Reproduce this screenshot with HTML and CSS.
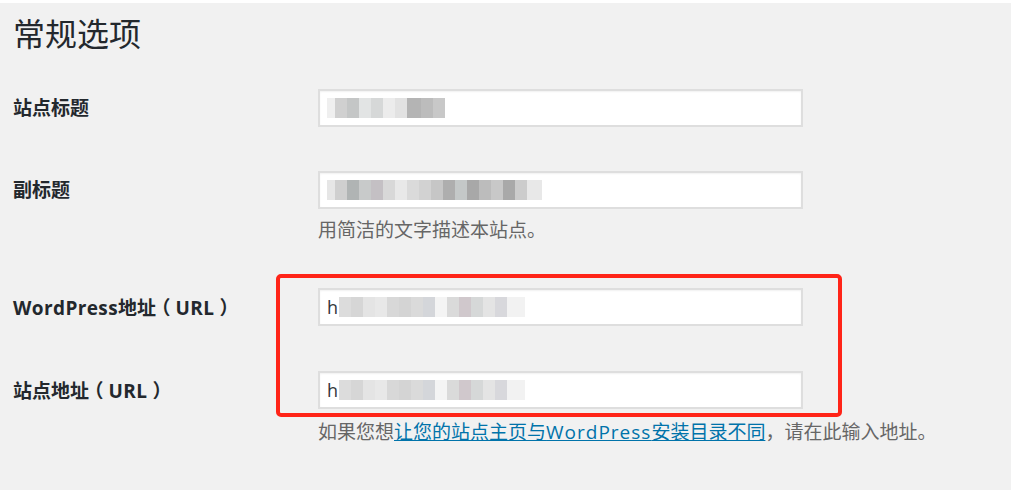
FILE: index.html
```html
<!DOCTYPE html>
<html lang="zh-CN">
<head>
<meta charset="utf-8">
<title>常规选项</title>
<link rel="stylesheet" href="styles.css">
</head>
<body>
<div class="topstrip"></div>
<main class="wrap">
  <h1 class="page-title">常规选项</h1>
  <div class="form-table">
    <div class="row">
      <label class="label">站点标题</label>
      <div class="field">
        <div class="input"><span class="mosaic m1"></span></div>
      </div>
    </div>
    <div class="row">
      <label class="label">副标题</label>
      <div class="field">
        <div class="input"><span class="mosaic m2"></span></div>
        <p class="desc">用简洁的文字描述本站点。</p>
      </div>
    </div>
    <div class="row">
      <label class="label"><span class="lat">WordPress</span>地址<span class="po">（</span><span class="lat">URL</span><span class="pc">）</span></label>
      <div class="field">
        <div class="input"><span class="val">h</span><span class="mosaic m3"></span></div>
      </div>
    </div>
    <div class="row">
      <label class="label">站点地址<span class="po">（</span><span class="lat">URL</span><span class="pc">）</span></label>
      <div class="field">
        <div class="input"><span class="val">h</span><span class="mosaic m3"></span></div>
        <p class="desc">如果您想<a href="#">让您的站点主页与<span class="lat">WordPress</span>安装目录不同</a><span class="fw">，</span>请在此输入地址。</p>
      </div>
    </div>
    <div class="row">
      <label class="label"></label>
      <div class="field">
        <div class="input"></div>
      </div>
    </div>
  </div>
  <div class="highlight"></div>
</main>
</body>
</html>
```
FILE: styles.css
```css
html, body {
  margin: 0;
  padding: 0;
  background: #f1f1f1;
  overflow: hidden;
}
body {
  font-family: "Open Sans", "Noto Sans CJK SC", sans-serif;
  color: #23282d;
}
.topstrip {
  height: 3px;
  background: #ffffff;
}
.wrap {
  position: relative;
  padding: 9px 0 0 13px;
}
.page-title {
  margin: 0 0 15px;
  font-family: "Noto Sans CJK SC", sans-serif;
  font-size: 32px;
  line-height: 40px;
  font-weight: 400;
  color: #23282d;
}
.form-table {
  display: flex;
  flex-direction: column;
}
.row {
  display: flex;
  align-items: flex-start;
  padding: 22px 0;
}
.label {
  width: 305px;
  flex: none;
  font-size: 19px;
  font-weight: 700;
  line-height: 38px;
  color: #23282d;
}
.label .lat {
  letter-spacing: 0.4px;
}
.po {
  font-family: "Noto Sans CJK SC", sans-serif;
  font-feature-settings: "halt" 1;
  margin-left: 5px;
  margin-right: 5px;
}
.pc {
  font-family: "Noto Sans CJK SC", sans-serif;
  font-feature-settings: "halt" 1;
  margin-left: 5px;
}
.fw {
  font-family: "Noto Sans CJK TC", sans-serif;
}
.field {
  display: flex;
  flex-direction: column;
}
.input {
  box-sizing: border-box;
  width: 485px;
  height: 38px;
  background: #fff;
  border: 2px solid #dedede;
  box-shadow: inset 0 1px 2px rgba(0,0,0,0.06);
  display: flex;
  align-items: center;
  padding-left: 7px;
  font-size: 18px;
  color: #32373c;
}
.val {
  line-height: 1;
}
.mosaic {
  display: inline-block;
  height: 20px;
}
.m1 {
  width: 118px;
  background:
    linear-gradient(90deg, #efefef 0 8px, #d0d0d0 8px 20px, #c4c6c6 20px 32px, #e2e4e4 32px 44px, #d6d8d8 44px 56px, #ececec 56px 68px, #e2e2e2 68px 80px, #b4b4b4 80px 94px, #bcbcbc 94px 106px, #c8c8c8 106px 118px);
}
.m2 {
  width: 215px;
  background:
    linear-gradient(90deg, #e6e6e6 0 8px, #cfcfcf 8px 20px, #b0b4b4 20px 32px, #c8caca 32px 44px, #c4c0c4 44px 56px, #d8d8d8 56px 68px, #e8e8e8 68px 80px, #dadada 80px 92px, #d2d2d2 92px 104px, #c6c6c6 104px 116px, #aeaeae 116px 128px, #c4c8c8 128px 140px, #a8a8a8 140px 152px, #bcbcbc 152px 164px, #c8c8c8 164px 176px, #a9a9a9 176px 188px, #cccccc 188px 200px, #e8e8e8 200px 215px);
}
.m3 {
  width: 186px;
  margin-left: 1px;
  background:
    linear-gradient(90deg, #dcdcdc 0 12px, #d6d6d6 12px 24px, #e4e4e4 24px 36px, #e8e8e8 36px 48px, #d8d8d8 48px 60px, #d4d4d4 60px 72px, #dadada 72px 84px, #d4d6da 84px 96px, #f4f4f4 96px 108px, #dadada 108px 120px, #d0c8cc 120px 132px, #d6d8d8 132px 144px, #e4e4e4 144px 156px, #d8d8dc 156px 168px, #f2f2f2 168px 186px);
}
.desc {
  margin: 8px 0 0;
  font-size: 19px;
  line-height: 27px;
  color: #666;
}
.desc .lat {
  letter-spacing: 1px;
}
.desc a {
  color: #0073aa;
  text-decoration: underline;
}
.highlight {
  position: absolute;
  left: 276px;
  top: 271px;
  width: 566px;
  height: 143px;
  box-sizing: border-box;
  border: 4px solid #ff2418;
  border-radius: 5px;
}
```
